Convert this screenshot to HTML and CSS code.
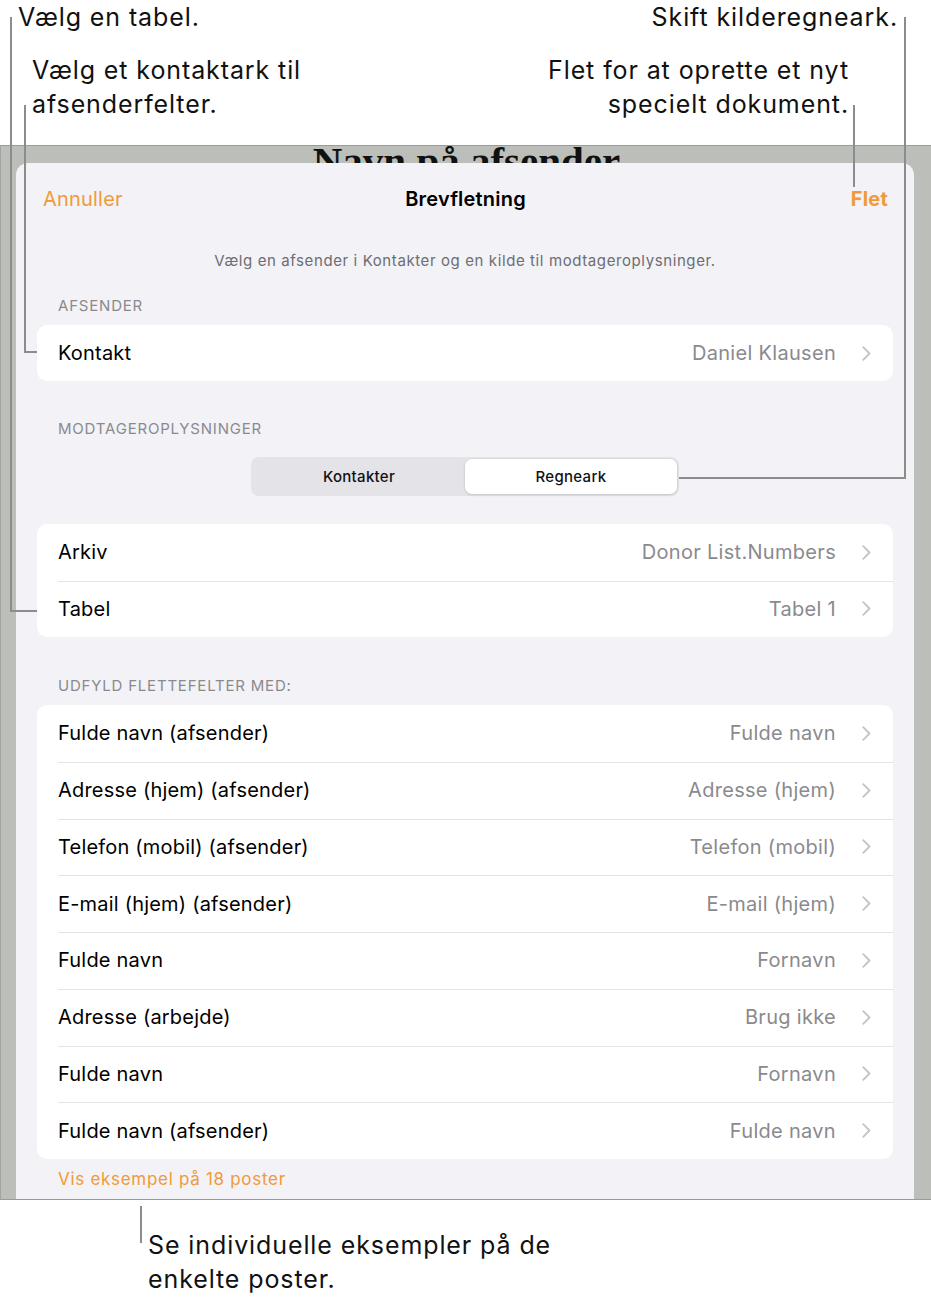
FILE: index.html
```html
<!DOCTYPE html>
<html lang="da">
<head>
<meta charset="utf-8">
<title>Brevfletning</title>
<link rel="stylesheet" href="styles.css">
</head>
<body>
<div class="page">
  <div class="callouts-top">
    <div class="col col-left">
      <p class="c1">Vælg en tabel.</p>
      <p class="c2">Vælg et kontaktark til<br>afsenderfelter.</p>
    </div>
    <div class="col col-right">
      <p class="c1">Skift kilderegneark.</p>
      <p class="c2">Flet for at oprette et nyt<br>specielt dokument.</p>
    </div>
  </div>

  <div class="frame">
    <div class="doc-title">Navn på afsender</div>
    <div class="sheet">
      <div class="nav">
        <span class="nav-cancel">Annuller</span>
        <span class="nav-title">Brevfletning</span>
        <span class="nav-done">Flet</span>
      </div>
      <p class="desc">Vælg en afsender i Kontakter og en kilde til modtageroplysninger.</p>

      <div class="section-header h-afsender">AFSENDER</div>
      <div class="card">
        <div class="row row-first"><span class="label">Kontakt</span><span class="value">Daniel Klausen</span><svg class="chev" width="9" height="15" viewBox="0 0 9 15"><path d="M1.2 1.2 L7.5 7.5 L1.2 13.8" fill="none" stroke="#c4c4c7" stroke-width="1.8" stroke-linecap="round" stroke-linejoin="round"/></svg></div>
      </div>

      <div class="section-header h-modtager">MODTAGEROPLYSNINGER</div>
      <div class="segmented">
        <div class="seg">Kontakter</div>
        <div class="seg seg-on">Regneark</div>
      </div>

      <div class="card card-source">
        <div class="row row-half row-first"><span class="label">Arkiv</span><span class="value">Donor List.Numbers</span><svg class="chev" width="9" height="15" viewBox="0 0 9 15"><path d="M1.2 1.2 L7.5 7.5 L1.2 13.8" fill="none" stroke="#c4c4c7" stroke-width="1.8" stroke-linecap="round" stroke-linejoin="round"/></svg></div>
        <div class="row row-half"><span class="label">Tabel</span><span class="value">Tabel 1</span><svg class="chev" width="9" height="15" viewBox="0 0 9 15"><path d="M1.2 1.2 L7.5 7.5 L1.2 13.8" fill="none" stroke="#c4c4c7" stroke-width="1.8" stroke-linecap="round" stroke-linejoin="round"/></svg></div>
      </div>

      <div class="section-header h-udfyld">UDFYLD FLETTEFELTER MED:</div>
      <div class="card card-fields">
        <div class="row row-field row-first"><span class="label">Fulde navn (afsender)</span><span class="value">Fulde navn</span><svg class="chev" width="9" height="15" viewBox="0 0 9 15"><path d="M1.2 1.2 L7.5 7.5 L1.2 13.8" fill="none" stroke="#c4c4c7" stroke-width="1.8" stroke-linecap="round" stroke-linejoin="round"/></svg></div>
        <div class="row row-field"><span class="label">Adresse (hjem) (afsender)</span><span class="value">Adresse (hjem)</span><svg class="chev" width="9" height="15" viewBox="0 0 9 15"><path d="M1.2 1.2 L7.5 7.5 L1.2 13.8" fill="none" stroke="#c4c4c7" stroke-width="1.8" stroke-linecap="round" stroke-linejoin="round"/></svg></div>
        <div class="row row-field"><span class="label">Telefon (mobil) (afsender)</span><span class="value">Telefon (mobil)</span><svg class="chev" width="9" height="15" viewBox="0 0 9 15"><path d="M1.2 1.2 L7.5 7.5 L1.2 13.8" fill="none" stroke="#c4c4c7" stroke-width="1.8" stroke-linecap="round" stroke-linejoin="round"/></svg></div>
        <div class="row row-field"><span class="label">E-mail (hjem) (afsender)</span><span class="value">E-mail (hjem)</span><svg class="chev" width="9" height="15" viewBox="0 0 9 15"><path d="M1.2 1.2 L7.5 7.5 L1.2 13.8" fill="none" stroke="#c4c4c7" stroke-width="1.8" stroke-linecap="round" stroke-linejoin="round"/></svg></div>
        <div class="row row-field"><span class="label">Fulde navn</span><span class="value">Fornavn</span><svg class="chev" width="9" height="15" viewBox="0 0 9 15"><path d="M1.2 1.2 L7.5 7.5 L1.2 13.8" fill="none" stroke="#c4c4c7" stroke-width="1.8" stroke-linecap="round" stroke-linejoin="round"/></svg></div>
        <div class="row row-field"><span class="label">Adresse (arbejde)</span><span class="value">Brug ikke</span><svg class="chev" width="9" height="15" viewBox="0 0 9 15"><path d="M1.2 1.2 L7.5 7.5 L1.2 13.8" fill="none" stroke="#c4c4c7" stroke-width="1.8" stroke-linecap="round" stroke-linejoin="round"/></svg></div>
        <div class="row row-field"><span class="label">Fulde navn</span><span class="value">Fornavn</span><svg class="chev" width="9" height="15" viewBox="0 0 9 15"><path d="M1.2 1.2 L7.5 7.5 L1.2 13.8" fill="none" stroke="#c4c4c7" stroke-width="1.8" stroke-linecap="round" stroke-linejoin="round"/></svg></div>
        <div class="row row-field"><span class="label">Fulde navn (afsender)</span><span class="value">Fulde navn</span><svg class="chev" width="9" height="15" viewBox="0 0 9 15"><path d="M1.2 1.2 L7.5 7.5 L1.2 13.8" fill="none" stroke="#c4c4c7" stroke-width="1.8" stroke-linecap="round" stroke-linejoin="round"/></svg></div>
      </div>

      <p class="preview-link">Vis eksempel på 18 poster</p>
    </div>
  </div>

  <div class="callouts-bottom">
    <p class="c3">Se individuelle eksempler på de<br>enkelte poster.</p>
  </div>

  <svg class="leaders" width="931" height="1301" viewBox="0 0 931 1301">
    <g fill="none" stroke="#8c8c8c" stroke-width="2">
      <path d="M11 17 V611 H37"/>
      <path d="M25 105 V352 H37"/>
      <path d="M905 17 V478 H679"/>
      <path d="M854 105 V187"/>
      <path d="M141 1206 V1243"/>
    </g>
  </svg>
</div>
</body>
</html>
```

FILE: styles.css
```css
* { box-sizing: border-box; }

html, body {
  margin: 0;
  padding: 0;
  background: #ffffff;
}

body {
  font-family: Inter, "Noto Sans", "Liberation Sans", sans-serif;
  color: #000;
}

p { margin: 0; }

.page {
  position: relative;
  width: 931px;
  height: 1301px;
  overflow: hidden;
}

/* ---------- callouts ---------- */
.callouts-top {
  height: 145px;
  display: flex;
  justify-content: space-between;
}

.col .c1,
.col .c2,
.c3 {
  font-size: 25px;
  line-height: 34px;
  letter-spacing: 0.9px;
  color: #111;
}

.col-left .c1 { padding-left: 18px; }
.col-left .c2 { padding-left: 32px; margin-top: 19px; }

.col-right { text-align: right; }
.col-right .c1 { padding-right: 33px; }
.col-right .c2 { padding-right: 82px; margin-top: 19px; }

.callouts-bottom {
  padding: 28px 0 0 148px;
}

.leaders {
  position: absolute;
  top: 0;
  left: 0;
  pointer-events: none;
  z-index: 5;
}

/* ---------- screenshot frame ---------- */
.frame {
  height: 1055px;
  background: #bcbeb9;
  border-top: 1px solid #9a9a9a;
  border-bottom: 1px solid #9a9a9a;
  border-left: 1px solid #a3a5a1;
  padding: 0 17px 0 15px;
  overflow: hidden;
}

.doc-title {
  height: 17px;
  font-family: "Liberation Serif", "DejaVu Serif", serif;
  font-weight: 700;
  font-size: 41px;
  line-height: 31px;
  text-align: center;
  color: #111;
  white-space: nowrap;
  padding-left: 3px;
}

.sheet {
  position: relative;
  z-index: 1;
  background: #f2f2f7;
  border-radius: 12px 12px 0 0;
  min-height: 1100px;
}

.nav {
  height: 72px;
  display: grid;
  grid-template-columns: 1fr auto 1fr;
  align-items: center;
  padding: 0 26px 0 27px;
  font-size: 20px;
  letter-spacing: 0.2px;
}

.nav-cancel { color: #f19a37; }
.nav-title { font-weight: 600; color: #000; }
.nav-done { color: #f19a37; font-weight: 700; justify-self: end; }

.desc {
  margin-top: 16px;
  font-size: 15px;
  line-height: 20px;
  letter-spacing: 0.6px;
  color: #6d6d72;
  text-align: center;
}

.section-header {
  padding-left: 42px;
  font-size: 15px;
  line-height: 20px;
  letter-spacing: 0.8px;
  color: #8a8a8e;
  margin-bottom: 9px;
}

.h-afsender { margin-top: 25px; }
.h-modtager { margin-top: 38px; margin-bottom: 18px; }
.h-udfyld { margin-top: 39px; }

.card {
  margin: 0 21px;
  background: #ffffff;
  border-radius: 10px;
  overflow: hidden;
}

.row {
  display: flex;
  align-items: center;
  height: 56px;
  padding: 0 22px 0 21px;
  font-size: 20px;
  letter-spacing: 0.2px;
  position: relative;
}

.row-half { height: 56.5px; }
.row-field { height: 56.75px; }

.row:not(.row-first)::before {
  content: "";
  position: absolute;
  top: 0;
  left: 21px;
  right: 0;
  height: 1px;
  background: #e4e4e8;
}

.label {
  flex: 1;
  color: #000;
}

.value {
  color: #8a8a8e;
  margin-right: 26px;
  letter-spacing: 0.3px;
}

.chev { display: block; flex: none; }

.segmented {
  width: 428px;
  height: 39px;
  margin: 0 auto 28px;
  padding: 2px;
  background: #e3e3e8;
  border-radius: 8px;
  display: grid;
  grid-template-columns: 1fr 1fr;
  font-size: 15px;
  font-weight: 500;
  letter-spacing: 0.3px;
}

.seg {
  display: flex;
  align-items: center;
  justify-content: center;
  border-radius: 7px;
  color: #111;
}

.seg-on {
  background: #ffffff;
  box-shadow: 0 1px 3px rgba(0, 0, 0, 0.12), 0 0 0 0.5px rgba(0, 0, 0, 0.04);
}

.preview-link {
  margin-top: 9px;
  padding-left: 42px;
  font-size: 17px;
  line-height: 22px;
  letter-spacing: 0.7px;
  color: #f19a37;
}
```
